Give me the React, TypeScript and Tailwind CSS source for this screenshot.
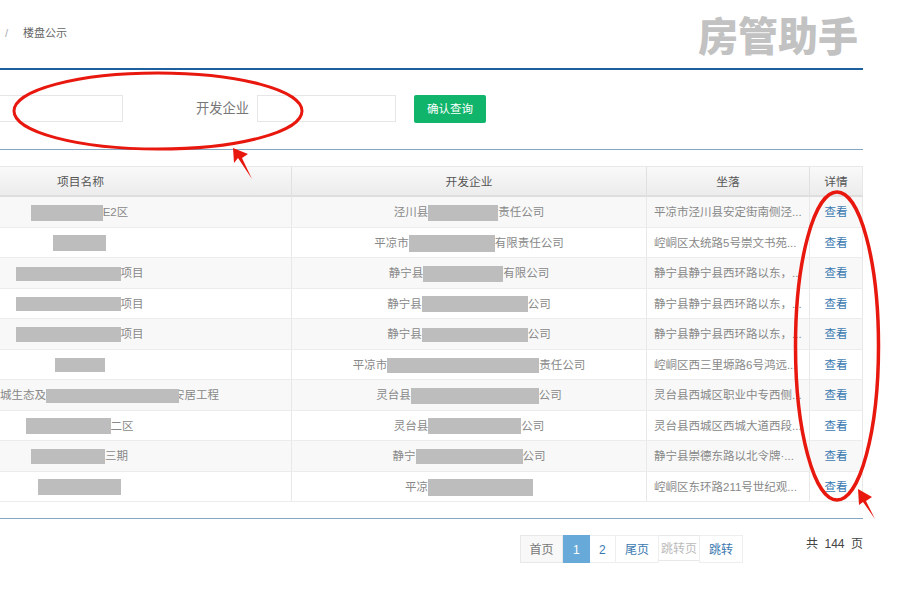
type Cell = { before?: string; indent?: boolean; w: number; h: number; after?: string; overlap?: boolean };

interface Row {
  name: Cell;
  company: Cell;
  address: string;
}

const rows: Row[] = [
  { name: { w: 72, h: 16, after: "E2区" }, company: { before: "泾川县", w: 70, h: 16, after: "责任公司" }, address: "平凉市泾川县安定街南侧泾..." },
  { name: { w: 53, h: 16 }, company: { before: "平凉市", w: 86, h: 17, after: "有限责任公司" }, address: "崆峒区太统路5号崇文书苑..." },
  { name: { w: 105, h: 14, after: "项目" }, company: { before: "静宁县", w: 80, h: 16, after: "有限公司" }, address: "静宁县静宁县西环路以东，..." },
  { name: { w: 105, h: 14, after: "项目" }, company: { before: "静宁县", w: 106, h: 16, after: "公司" }, address: "静宁县静宁县西环路以东，..." },
  { name: { w: 105, h: 15, after: "项目" }, company: { before: "静宁县", w: 106, h: 14, after: "公司" }, address: "静宁县静宁县西环路以东，..." },
  { name: { w: 50, h: 14 }, company: { before: "平凉市", w: 152, h: 15, after: "责任公司" }, address: "崆峒区西三里塬路6号鸿远..." },
  { name: { before: "城生态及", indent: true, w: 133, h: 14, after: "安居工程", overlap: true }, company: { before: "灵台县", w: 128, h: 16, after: "公司" }, address: "灵台县西城区职业中专西侧..." },
  { name: { w: 85, h: 16, after: "二区" }, company: { before: "灵台县", w: 93, h: 16, after: "公司" }, address: "灵台县西城区西城大道西段..." },
  { name: { w: 74, h: 15, after: "三期" }, company: { before: "静宁", w: 107, h: 15, after: "公司" }, address: "静宁县崇德东路以北令牌·..." },
  { name: { w: 83, h: 16 }, company: { before: "平凉", w: 105, h: 17 }, address: "崆峒区东环路211号世纪观..." },
];

const Masked = ({ cell, className = "" }: { cell: Cell; className?: string }) => (
  <div className={`flex items-center justify-center pt-[2px] border-r border-[#e8e8e8] whitespace-nowrap ${className}`}>
    {cell.before && <span className={cell.indent ? "ml-[60px]" : ""}>{cell.before}</span>}
    <span className="relative z-10 bg-[#bdbdbd] shrink-0" style={{ width: cell.w, height: cell.h }} />
    {cell.after && <span className={cell.overlap ? "ml-[-6px]" : ""}>{cell.after}</span>}
  </div>
);

const Annotations = () => (
  <svg className="absolute inset-0 z-20 pointer-events-none" width="900" height="600" viewBox="0 0 900 600">
    <ellipse cx="158" cy="111" rx="144" ry="38" fill="none" stroke="#e8180f" strokeWidth="3" />
    <ellipse cx="837" cy="346" rx="41.5" ry="154" fill="none" stroke="#e8180f" strokeWidth="3.5" />
    <polygon points="233,148 248,154 242,158 252,179 238,158 234,163" fill="#e8180f" />
    <polygon points="858,489 872,497 866,501 875,519 863,502 859,505" fill="#e8180f" />
  </svg>
);

export default function App() {
  return (
    <div className="relative w-[900px] h-[600px] overflow-hidden bg-white font-['Liberation_Sans','Noto_Sans_CJK_SC',sans-serif]">
      <div className="w-[993px] ml-[-130px]">
        <div className="flex items-center justify-between h-[70px] border-b-2 border-[#1d5f9f] pl-[135px] pr-[5px]">
          <div className="flex items-center text-[11px] text-[#666] mt-[-2px]">
            <span className="text-[#aaa] mr-[15px]">/</span>
            <span>楼盘公示</span>
          </div>
          <div className="text-[40px] leading-[48px] font-black text-[#c2c2c2] mt-[6px]">房管助手</div>
        </div>

        <div className="flex items-center h-[80px] pb-[2px] border-b border-[#86a7c2]">
          <input className="w-[253px] h-[27px] border border-[#e6e6e6]" />
          <label className="ml-[73px] w-[54px] pt-[1px] text-[13.25px] text-[#777] whitespace-nowrap">开发企业</label>
          <input className="ml-[7px] w-[139px] h-[27px] border border-[#e6e6e6]" />
          <button className="ml-[18px] w-[72px] h-[28px] pt-[2px] rounded-[2px] bg-[#10b56b] text-[11.5px] text-white">确认查询</button>
        </div>

        <div className="mt-[16px] border-t border-[#e8e8e8] text-[11.5px] text-[#888]">
          <div className="grid grid-cols-[422px_355px_163px_53px] h-[30px] border-b-2 border-[#dedede] bg-gradient-to-b from-[#f9f9f9] to-[#ececec] text-[11.75px] text-[#555]">
            <div className="flex items-center justify-center pt-[2px] border-r border-[#e0e0e0]">项目名称</div>
            <div className="flex items-center justify-center pt-[2px] border-r border-[#e0e0e0]">开发企业</div>
            <div className="flex items-center justify-center pt-[2px] border-r border-[#e0e0e0]">坐落</div>
            <div className="flex items-center justify-center pt-[2px] border-r border-[#e8e8e8]">详情</div>
          </div>
          {rows.map((row, i) => (
            <div
              key={i}
              className={`grid grid-cols-[422px_355px_163px_53px] h-[30.5px] border-b border-[#ececec] ${i % 2 === 0 ? "bg-[#f8f8f8]" : "bg-white"}`}
            >
              <Masked cell={row.name} className="pr-[2px]" />
              <Masked cell={row.company} />
              <div className="flex items-center pl-[7px] pt-[2px] border-r border-[#e8e8e8] whitespace-nowrap">{row.address}</div>
              <div className="flex items-center justify-center pt-[2px] border-r border-[#e8e8e8] text-[#3a78b0]">查看</div>
            </div>
          ))}
        </div>

        <div className="mt-[16px] border-t border-[#86a7c2] flex justify-end pt-[16px] text-[12px]">
          <div className="flex items-start">
            <div className="flex items-center justify-center w-[43px] h-[28px] pt-[1px] border border-[#e8e8e8] bg-[#f8f8f8] text-[#777]">首页</div>
            <div className="flex items-center justify-center w-[27px] h-[28px] pt-[1px] bg-[#67a9d8] text-white">1</div>
            <div className="flex items-center justify-center w-[25px] h-[28px] pt-[1px] border-y border-[#eee] text-[#3a78b0]">2</div>
            <div className="flex items-center justify-center w-[44px] h-[28px] pt-[1px] border border-[#eee] text-[#3a78b0]">尾页</div>
            <div className="flex items-center justify-center w-[40px] h-[26px] pt-[1px] border-y border-[#e8e8e8] text-[#bbb] whitespace-nowrap">跳转页</div>
            <div className="flex items-center justify-center w-[44px] h-[28px] pt-[1px] border border-[#eee] text-[#3a78b0]">跳转</div>
          </div>
          <div className="flex gap-[6.5px] ml-[63px] mt-[2px] h-[14px] items-center text-[#444] whitespace-nowrap">
            <span>共</span>
            <span>144</span>
            <span>页</span>
          </div>
        </div>
      </div>
      <Annotations />
    </div>
  );
}
